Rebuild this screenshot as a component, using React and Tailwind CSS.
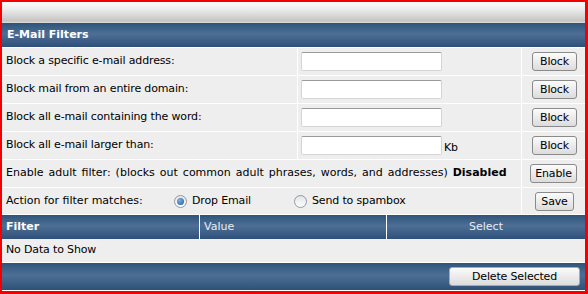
const FONT = { fontFamily: '"DejaVu Sans", Verdana, sans-serif' }

const BLOCK_ROWS = [
  { label: 'Block a specific e-mail address:' },
  { label: 'Block mail from an entire domain:' },
  { label: 'Block all e-mail containing the word:' },
  { label: 'Block all e-mail larger than:', suffix: 'Kb' },
]

function Btn({ children, className = '' }) {
  return (
    <button
      className={`h-[19px] rounded-[3px] border border-[#8a8a8a] bg-gradient-to-b from-[#fbfbfb] to-[#dcdcdc] text-[11px] leading-none text-black ${className}`}
    >
      {children}
    </button>
  )
}

function Radio({ checked }) {
  return (
    <span className="w-[13px] h-[13px] rounded-full border border-[#8d9aa6] bg-gradient-to-b from-[#e4e4e4] to-white flex items-center justify-center shrink-0">
      {checked && (
        <span className="w-[7px] h-[7px] rounded-full bg-[radial-gradient(circle_at_35%_35%,#7ab0e0,#1f5d9c)]" />
      )}
    </span>
  )
}

const BLUE = 'bg-[linear-gradient(#2f5479,#4d6f96_45%,#2e5177)]'

export default function App() {
  return (
    <div className="w-[588px] h-[294px] bg-[#f20000] pt-[2px] pl-[2px] pr-[3px] pb-[3px] tracking-[-0.15px]" style={FONT}>
      <div className="h-full bg-white flex flex-col">
        <div className="h-[21px] bg-[linear-gradient(#fbfbfb,#ececec_35%,#c4c4c4_90%,#dcdcdc)]" />
        <div className={`h-[24px] ${BLUE} flex items-center pl-[5px] text-white text-[11px] font-bold tracking-normal`}>
          E-Mail Filters
        </div>

        <div className="grid grid-cols-[295px_223px_1fr] gap-px bg-white pt-px">
          {BLOCK_ROWS.map(r => (
            <div key={r.label} className="contents">
              <div className="h-[27px] bg-[#eeeeee] flex items-center pl-[4px] text-[11px] text-black">{r.label}</div>
              <div className="h-[27px] bg-[#eeeeee] flex items-center pl-[3px] text-[11px] text-black">
                <div className="w-[141px] h-[19px] bg-white border border-[#d4d4d4] border-t-[#9a9a9a] rounded-[2px]" />
                {r.suffix && <span className="ml-[2px] mt-[6px]">{r.suffix}</span>}
              </div>
              <div className="h-[27px] bg-[#eeeeee] flex items-center justify-center pl-[2px]">
                <Btn className="w-[45px]">Block</Btn>
              </div>
            </div>
          ))}
          <div className="col-span-2 h-[27px] bg-[#eeeeee] flex items-center pl-[4px] text-[11px] text-black whitespace-nowrap tracking-normal [word-spacing:1.5px]">
            Enable adult filter: (blocks out common adult phrases, words, and addresses)&nbsp;<b>Disabled</b>
          </div>
          <div className="h-[27px] bg-[#eeeeee] flex items-center justify-center">
            <Btn className="w-[47px]">Enable</Btn>
          </div>
          <div className="col-span-2 h-[26px] bg-[#eeeeee] flex items-center pl-[4px] text-[11px] text-black">
            <span className="w-[168px] tracking-normal">Action for filter matches:</span>
            <Radio checked />
            <span className="ml-[5px] w-[102px]">Drop Email</span>
            <Radio />
            <span className="ml-[5px]">Send to spambox</span>
          </div>
          <div className="h-[26px] bg-[#eeeeee] flex items-center justify-center pl-[2px]">
            <Btn className="w-[39px]">Save</Btn>
          </div>
        </div>

        <div className="grid grid-cols-[197px_186px_1fr] gap-x-px bg-white pt-px h-[25px] text-[11px] tracking-normal">
          <div className={`${BLUE} flex items-center pl-[4px] text-white font-bold`}>Filter</div>
          <div className={`${BLUE} flex items-center pl-[4px] text-[#e6edf5]`}>Value</div>
          <div className={`${BLUE} flex items-center justify-center text-[#e6edf5]`}>Select</div>
        </div>
        <div className="h-[23px] bg-[#eeeeee] flex items-center pl-[4px] text-[11px] text-black">No Data to Show</div>
        <div className={`mt-px flex-1 ${BLUE} flex items-center justify-end pr-[5px] border-b border-white`}>
          <Btn className="w-[131px] h-[18px] border-[#aaaaaa]">Delete Selected</Btn>
        </div>
      </div>
    </div>
  )
}
